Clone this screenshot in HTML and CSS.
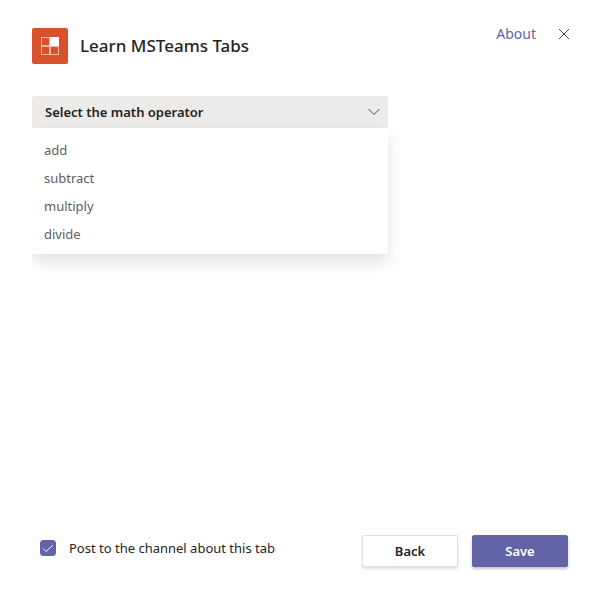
FILE: index.html
```html
<!DOCTYPE html>
<html lang="en">
<head>
<meta charset="utf-8">
<meta name="viewport" content="width=device-width, initial-scale=1">
<title>Learn MSTeams Tabs</title>
<link rel="stylesheet" href="styles.css">
</head>
<body>
<form class="dialog">
  <header class="header">
    <svg class="app-icon" viewBox="0 0 36 36" aria-hidden="true">
      <rect width="36" height="36" rx="2" fill="#d9512c"/>
      <g fill="none" stroke="#f2b8a6">
        <rect x="9.5" y="9.5" width="8" height="8"/>
        <rect x="9.5" y="18.5" width="8" height="8"/>
        <rect x="18.5" y="18.5" width="8" height="8"/>
      </g>
      <rect x="18" y="9" width="9" height="9" fill="#fff"/>
    </svg>
    <h1 class="title">Learn MSTeams Tabs</h1>
    <nav class="actions">
      <a class="about" href="#about">About</a>
      <button class="close" type="button" aria-label="Close">
        <svg viewBox="0 0 12 12" aria-hidden="true"><path d="M1 1l10 10M11 1L1 11"/></svg>
      </button>
    </nav>
  </header>
  <main class="content">
    <div class="dropdown">
      <button class="trigger" type="button" id="trigger" aria-haspopup="listbox" aria-expanded="true" aria-controls="operators">
        <span>Select the math operator</span>
        <svg viewBox="0 0 12 8" aria-hidden="true"><path d="M.5 1L6 6.500L11.500 1"/></svg>
      </button>
      <div class="popup">
        <select class="options" id="operators" size="4" aria-labelledby="trigger">
          <option>add</option>
          <option>subtract</option>
          <option>multiply</option>
          <option>divide</option>
        </select>
      </div>
    </div>
  </main>
  <footer class="footer">
    <label class="post" for="post">
      <span class="check">
        <input type="checkbox" id="post" checked>
        <svg viewBox="0 0 16 16" aria-hidden="true"><path d="M3 8.500l3 3L13 5"/></svg>
      </span>
      Post to the channel about this tab
    </label>
    <div class="buttons">
      <button class="button" type="button">Back</button>
      <button class="button primary" type="submit">Save</button>
    </div>
  </footer>
</form>
</body>
</html>
```
FILE: styles.css
```css
* { box-sizing: border-box; }

body {
  margin: 0;
  background: #fff;
  color: #252423;
  font: 13px/20px "Noto Sans", "Open Sans", sans-serif;
}

button, select { font: inherit; color: inherit; }

.dialog {
  display: flex;
  flex-direction: column;
  min-height: 100vh;
  padding: 28px 32px 32px;
}

.header {
  display: flex;
  align-items: center;
  gap: 12px;
}

.app-icon { width: 36px; height: 36px; flex: none; }

.title {
  flex: 1;
  margin: 0;
  font-size: 17px;
  line-height: 24px;
  font-weight: 500;
}

.actions {
  display: flex;
  align-items: center;
  align-self: flex-start;
  gap: 22px;
  margin-right: -2px;
  margin-top: -8px;
}

.about { color: #6264a7; font-size: 14px; text-decoration: none; }

.close {
  width: 12px;
  padding: 8px 0;
  border: 0;
  background: none;
}

.close svg, .trigger svg {
  display: block;
  width: 12px;
  fill: none;
  stroke: #484644;
}

.content { flex: 1; padding-top: 32px; }

.dropdown {
  position: relative;
  width: 66.5%;
  clip-path: inset(0 -32px -200px 0);
}

.trigger {
  display: flex;
  align-items: center;
  justify-content: space-between;
  width: 100%;
  height: 32px;
  padding: 0 8px 0 13px;
  border: 0;
  border-radius: 3px 3px 0 0;
  background: #edebe9;
  font-weight: 600;
}

.popup {
  position: absolute;
  top: 100%;
  left: 0;
  right: 0;
  padding: 9px 0 5px;
  border-radius: 0 0 3px 3px;
  background: #fff;
  box-shadow: 0 8px 16px rgba(0, 0, 0, 0.12);
}

.options {
  display: block;
  width: 100%;
  height: 112px;
  padding: 0;
  border: 0;
  outline: 0;
  overflow: hidden;
  background: none;
}

.options option {
  min-height: 28px;
  padding: 4px 12px;
  line-height: 20px;
  color: #605e5c;
}

.footer {
  display: flex;
  align-items: center;
  justify-content: space-between;
}

.post {
  display: flex;
  align-items: center;
  gap: 13px;
  padding: 0 0 8px 8px;
}

.check { display: grid; }

.check input, .check svg {
  grid-area: 1 / 1;
  width: 16px;
  height: 16px;
  margin: 0;
}

.check input {
  appearance: none;
  border: 1px solid #6264a7;
  border-radius: 3px;
}

.check input:checked { background: #6264a7; }

.check svg {
  fill: none;
  stroke: #fff;
  pointer-events: none;
}

.check input:not(:checked) + svg { display: none; }

.buttons { display: flex; gap: 14px; margin-bottom: 1px; }

.button {
  width: 96px;
  height: 32px;
  padding: 0;
  border: 1px solid #e1dfdd;
  border-radius: 2px;
  background: #fff;
  box-shadow: 0 2px 3px rgba(0, 0, 0, 0.12);
  font-weight: 600;
}

.primary {
  border-color: #6264a7;
  background: #6264a7;
  box-shadow: 0 2px 3px rgba(0, 0, 0, 0.24);
  color: #fff;
}
```
